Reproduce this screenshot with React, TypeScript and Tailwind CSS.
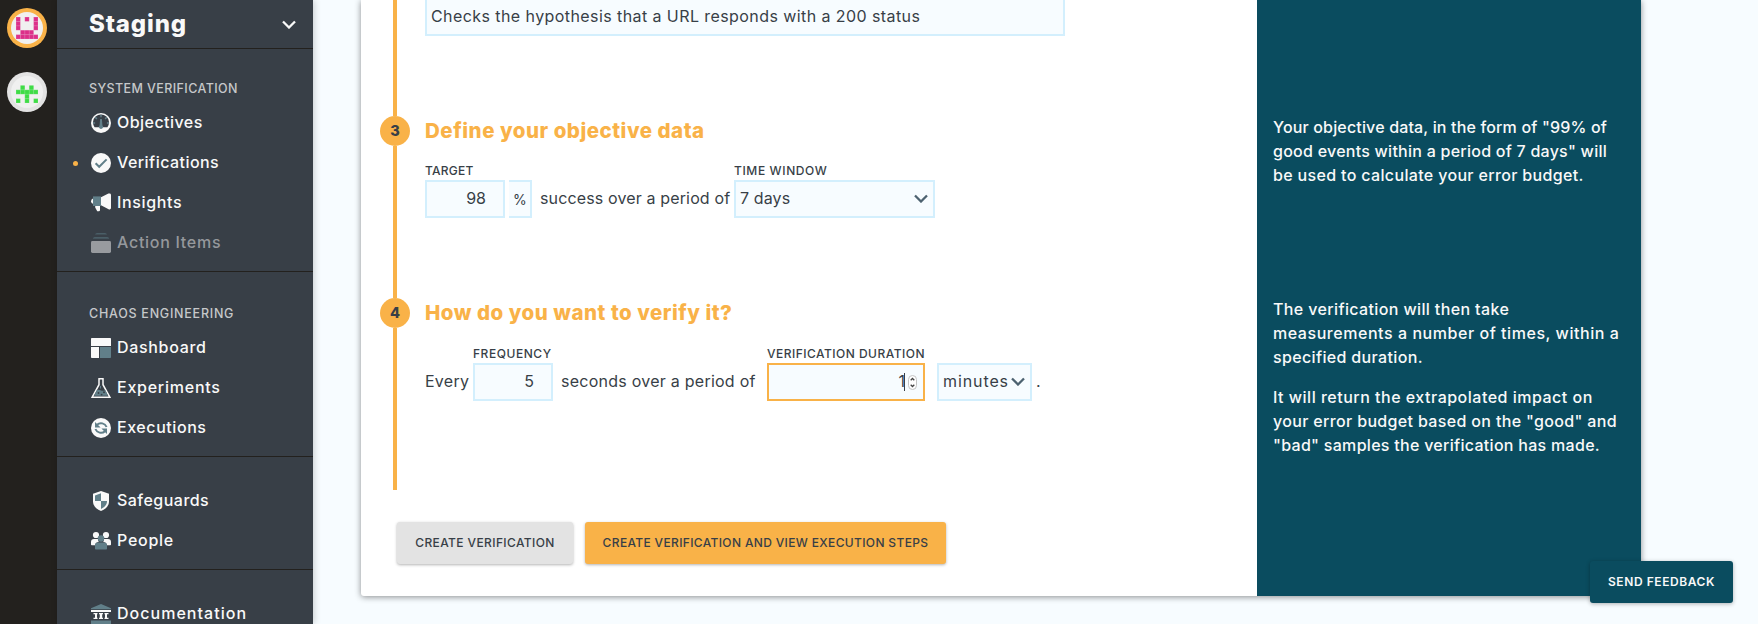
import React from "react";

const LIGHT = "#f9f9f9";
const SLATE = "#617f89";
const DARK = "#383f47";

function Svg({ children }: { children: React.ReactNode }) {
  return (
    <svg width="20" height="20" viewBox="0 0 20 20" className="shrink-0">
      {children}
    </svg>
  );
}

const icons: Record<string, React.ReactNode> = {
  objectives: (
    <Svg>
      <circle cx="10" cy="10" r="10" fill={LIGHT} />
      <path d="M3.6 14.2A8 8 0 1 1 16.4 14.2Z" fill={DARK} />
      <path d="M10 1.8v2.4M4.2 4.2l1.7 1.7M15.8 4.2l-1.7 1.7M1.9 10h2.2M18.1 10h-2.2" stroke={SLATE} strokeWidth="1.5" />
      <path d="M9.1 6h1.8l.5 6.3a2.1 2.1 0 1 1-2.8 0Z" fill={SLATE} />
    </Svg>
  ),
  verifications: (
    <Svg>
      <circle cx="10" cy="10" r="10" fill={LIGHT} />
      <path d="M4.6 10.2l3.6 3.6L15.6 6.4" fill="none" stroke={SLATE} strokeWidth="2" />
    </Svg>
  ),
  insights: (
    <Svg>
      <path d="M2 5.6A3 3 0 0 0 0 8.2a3 3 0 0 0 2 2.6Z" fill={LIGHT} />
      <rect x="2" y="3.4" width="8" height="9.6" fill={SLATE} />
      <path d="M10 4.2 17.4.6A1.8 1.8 0 0 1 20 2v13a1.6 1.6 0 0 1-2.4 1.3L10 12.2ZM4.2 13H9v4a1.2 1.2 0 0 1-1.2 1.2H6.2L4.2 14.6Z" fill={LIGHT} />
    </Svg>
  ),
  actions: (
    <Svg>
      <path d="M6 0h8q1.600 0 2 1.600H4Q4.400 0 6 0ZM3.600 4h12.800q1.400 0 1.800 1.800H1.800Q2.200 4 3.600 4Z" fill="#4a5e67" />
      <rect x="0" y="8" width="20" height="12" rx="1.4" fill="#989b9f" />
    </Svg>
  ),
  dashboard: (
    <Svg>
      <path d="M.8 0h18.400a.8.8 0 0 1 .8.8V8H0V.8A.8.8 0 0 1 .8 0ZM0 9h8v11H.8a.8.8 0 0 1-.8-.8Z" fill={LIGHT} />
      <path d="M9 9h11v10.200a.8.8 0 0 1-.8.8H9Z" fill={SLATE} />
    </Svg>
  ),
  experiments: (
    <Svg>
      <path d="M7.300.7h5.400M8 .7v6L1.200 19.200h17.600L12 6.700v-6" fill="none" stroke={LIGHT} strokeWidth="1.500" />
      <path d="M5.800 12.200q2-.8 4.200.2t4.300-.5L17 17.800H3Z" fill={SLATE} />
      <path d="M9.500 8v2.500" stroke={SLATE} strokeWidth="1" />
      <circle cx="7.500" cy="15" r=".9" fill={DARK} />
      <circle cx="10.600" cy="16.600" r=".9" fill={DARK} />
      <circle cx="13" cy="14.300" r="1" fill={DARK} />
    </Svg>
  ),
  executions: (
    <Svg>
      <circle cx="10" cy="10" r="10" fill={LIGHT} />
      <path d="M6 6.800A6 6 0 0 1 15.600 9M14 13.200A6 6 0 0 1 4.400 11" fill="none" stroke={SLATE} strokeWidth="2" />
      <path d="M4 4v5.400h5.600ZM16 16v-5.400h-5.600Z" fill={SLATE} />
    </Svg>
  ),
  safeguards: (
    <Svg>
      <path d="M10 0 18 2.800V10.500C18 15 14.200 18.400 10 20 5.800 18.400 2 15 2 10.500V2.800Z" fill={LIGHT} />
      <path d="M10 2.300V10H4V4.400ZM10 10h6c0 4-2.500 6.300-6 7.900Z" fill={SLATE} />
    </Svg>
  ),
  people: (
    <Svg>
      <circle cx="5" cy="4" r="3.100" fill={LIGHT} />
      <circle cx="15" cy="4" r="3.100" fill={LIGHT} />
      <path d="M0 11a3 3 0 0 1 3-3h4.200a3.600 3.600 0 0 0 .6 3A4 4 0 0 0 4 14.200H.8a.8.8 0 0 1-.8-.8ZM20 11a3 3 0 0 0-3-3h-4.200a3.600 3.600 0 0 1-.6 3 4 4 0 0 1 3.800 3.200h3.200a.8.8 0 0 0 .8-.8Z" fill={LIGHT} />
      <circle cx="10" cy="7.500" r="3.200" fill={SLATE} />
      <path d="M4 14.500a3 3 0 0 1 3-3h6a3 3 0 0 1 3 3v3.200a.8.8 0 0 1-.8.8H4.800a.8.8 0 0 1-.8-.8Z" fill={SLATE} />
    </Svg>
  ),
  documentation: (
    <Svg>
      <path d="M10 0 20 4.200V5.200H0V4.200ZM0 16.500h20V20H0Z" fill={SLATE} />
      <path d="M0 6h20v2H0ZM2.500 9h4v1.200H6v3.600h.5V15h-4v-1.200H4v-3.600H2.500ZM8 9h4v1.200h-.8v3.600h.8V15H8v-1.200h.8v-3.600H8ZM13.500 9h4v1.200H16v3.600h1.500V15h-4v-1.200h.5v-3.600h-.5Z" fill={LIGHT} />
    </Svg>
  ),
};

function Avatar({ ring, color, cells }: { ring: string; color: string; cells: string[] }) {
  return (
    <svg width="40" height="40" viewBox="0 0 40 40">
      <circle cx="20" cy="20" r="20" fill={ring} />
      <circle cx="20" cy="20" r="16" fill="#f0f0f0" />
      {cells.flatMap((row, y) =>
        row.split("").map((c, x) =>
          c === "X" ? (
            <g key={`${x}-${y}`}>
              <rect x={9 + x * 4.4} y={9 + y * 4.4} width="4.400" height="4.400" fill={color} fillOpacity="0.8" />
              <rect x={9.5 + x * 4.4} y={9.5 + y * 4.4} width="3.500" height="3.500" fill={color} />
            </g>
          ) : null,
        ),
      )}
    </svg>
  );
}

function NavItem({ icon, label, track, active, muted }: { icon: string; label: string; track: string; active?: boolean; muted?: boolean }) {
  return (
    <li className="flex h-10 items-center">
      <span className={`mr-[13px] ml-[16px] size-[5px] rounded-full ${active ? "bg-[#f9b248]" : ""}`} />
      {icons[icon]}
      <span className={`ml-[6px] pb-0.5 text-base font-medium ${track} ${muted ? "text-[#95989c]" : "text-[#f9f9f9]"}`}>{label}</span>
    </li>
  );
}

function Chevron({ color }: { color: string }) {
  return (
    <svg width="14" height="10" viewBox="0 0 14 10" className="shrink-0">
      <path d="M1 2.500l6 6 6-6" fill="none" stroke={color} strokeWidth="2.300" />
    </svg>
  );
}

const LABEL = "flex h-4 items-center pt-[2px] text-[12px] font-medium whitespace-nowrap text-[#383f47]";
const BOX = "flex h-[38px] items-center border-2 border-[#d3effd] bg-[#f7fcff] pb-0.5";
const HEADING = "mt-20 h-[30px] text-[20.500px] leading-[30px] font-extrabold text-[#f9b248]";

function Label({ text, track }: { text: string; track: string }) {
  return <label className={`${LABEL} ${track}`}>{text}</label>;
}

function Marker({ n }: { n: number }) {
  return (
    <div className="flex size-[30px] items-center justify-center rounded-full bg-[#f9b248] text-[14.500px] font-extrabold text-[#383f47]">{n}</div>
  );
}

export default function App() {
  return (
    <div className="relative flex h-[624px] w-[1758px] overflow-hidden bg-[#f7fcff] font-['Inter',sans-serif] text-[#383f47]">
      <aside className="flex w-[57px] shrink-0 flex-col gap-6 bg-[#23211e] pt-2 pl-[7px]">
        <Avatar ring="#f9b248" color="#dc3089" cells={["X.X.X", "X...X", "X...X", ".XXX.", "XXXXX"]} />
        <Avatar ring="#e3e3e3" color="#3fdc46" cells={[".....", ".X.X.", "XXXXX", "..X..", "X.X.X"]} />
      </aside>

      <nav className="w-[256px] shrink-0 bg-[#383f47] shadow-[1px_0_7px_rgba(0,0,0,0.2)]">
        <header className="flex h-[49px] items-center justify-between border-b border-[#23211e] pr-[17px] pl-8">
          <h1 className="text-[24px] font-extrabold tracking-[0.850px] text-[#f9f9f9]">Staging</h1>
          <Chevron color="#f9f9f9" />
        </header>
        <section className="border-b border-[#23211e] pt-[30px] pb-2">
          <h2 className="mb-1 h-5 pl-8 text-[12.500px] leading-5 font-medium tracking-[0.400px] text-[#c6c8ca]">SYSTEM VERIFICATION</h2>
          <ul>
            <NavItem icon="objectives" label="Objectives" track="tracking-[0.450px]" />
            <NavItem icon="verifications" label="Verifications" track="tracking-[0.450px]" active />
            <NavItem icon="insights" label="Insights" track="tracking-[0.650px]" />
            <NavItem icon="actions" label="Action Items" track="tracking-[0.720px]" muted />
          </ul>
        </section>
        <section className="border-b border-[#23211e] pt-8 pb-2">
          <h2 className="mb-1 h-5 pl-8 text-[12.500px] leading-5 font-medium tracking-[0.750px] text-[#c6c8ca]">CHAOS ENGINEERING</h2>
          <ul>
            <NavItem icon="dashboard" label="Dashboard" track="tracking-[0.680px]" />
            <NavItem icon="experiments" label="Experiments" track="tracking-[0.750px]" />
            <NavItem icon="executions" label="Executions" track="tracking-[0.570px]" />
          </ul>
        </section>
        <section className="border-b border-[#23211e] pt-6 pb-2">
          <ul>
            <NavItem icon="safeguards" label="Safeguards" track="tracking-[0.470px]" />
            <NavItem icon="people" label="People" track="tracking-[0.720px]" />
          </ul>
        </section>
        <section className="pt-6">
          <ul>
            <NavItem icon="documentation" label="Documentation" track="tracking-[1.030px]" />
          </ul>
        </section>
      </nav>

      <main className="flex-1 pl-12">
        <div className="flex h-[596px] w-[1280px] rounded-b-[3px] bg-white shadow-[0_1px_6px_rgba(0,0,0,0.45)]">
          <form className="w-[896px] shrink-0">
            <div className="flex h-[490px] pl-[19px]">
              <div className="flex w-[30px] shrink-0 flex-col items-center">
                <div className="h-[116px] w-1 bg-[#f9b248]" />
                <Marker n={3} />
                <div className="h-[152px] w-1 bg-[#f9b248]" />
                <Marker n={4} />
                <div className="h-[162px] w-1 bg-[#f9b248]" />
              </div>

              <div className="ml-[15px]">
                <div className="flex h-9 w-[640px] items-center border-x-2 border-b-2 border-[#d3effd] bg-[#f7fcff] pb-0.5 pl-1 text-base tracking-[0.420px] whitespace-nowrap">
                  Checks the hypothesis that a URL responds with a 200 status
                </div>

                <h3 className={`${HEADING} tracking-[0.510px]`}>Define your objective data</h3>
                <div className="mt-4 flex items-end text-base">
                  <div className="flex flex-col gap-0.5">
                    <Label text="TARGET" track="tracking-[0.230px]" />
                    <div className={`${BOX} w-20 justify-end pr-[17px]`}>98</div>
                  </div>
                  <div className="ml-1 flex h-[38px] w-[23px] items-center border-y-2 border-r-2 border-[#d3effd] bg-[#f7fcff] pl-[4px] text-[14px]">%</div>
                  <span className="ml-2 flex h-[38px] w-[194px] items-center pb-0.5 tracking-[0.140px] whitespace-nowrap">success over a period of</span>
                  <div className="flex flex-col gap-0.5">
                    <Label text="TIME WINDOW" track="tracking-[0.620px]" />
                    <div className={`${BOX} w-[201px] justify-between pr-[5px] pl-1 tracking-[0.120px]`}>
                      7 days
                      <Chevron color="#4d6270" />
                    </div>
                  </div>
                </div>

                <h3 className={`${HEADING} tracking-[0.510px]`}>How do you want to verify it?</h3>
                <div className="mt-[17px] flex items-end text-base">
                  <span className="flex h-[38px] w-12 items-center pb-0.5 tracking-[0.250px]">Every</span>
                  <div className="flex flex-col gap-0.5">
                    <Label text="FREQUENCY" track="tracking-[0.550px]" />
                    <div className={`${BOX} w-20 justify-end pr-[17px]`}>5</div>
                  </div>
                  <span className="ml-2 flex h-[38px] w-[206px] items-center pb-0.5 tracking-[0.250px] whitespace-nowrap">seconds over a period of</span>
                  <div className="flex flex-col gap-0.5">
                    <Label text="VERIFICATION DURATION" track="tracking-[0.480px]" />
                    <div className="flex h-[38px] w-[158px] items-center justify-end border-2 border-[#f9b248] bg-[#f7fcff] pr-1.5">
                      <span className="-mr-px pb-0.5">1</span>
                      <span className="h-[18px] w-px bg-[#383f47]" />
                      <svg width="9" height="15" viewBox="0 0 9 15" className="ml-[3px]">
                        <rect x=".5" y=".5" width="8" height="14" rx="4" fill="#fff" stroke="#c4c4c4" />
                        <path d="M2.700 5.300 4.500 3.500l1.800 1.800M2.700 9.700l1.800 1.800 1.800-1.800" fill="none" stroke="#444" strokeWidth="1.300" />
                      </svg>
                    </div>
                  </div>
                  <div className={`${BOX} ml-3 w-[95px] justify-between pr-[5px] pl-1 tracking-[0.900px]`}>
                    minutes
                    <Chevron color="#4d6270" />
                  </div>
                  <span className="ml-1 flex h-[38px] items-center pb-0.5">.</span>
                </div>
              </div>
            </div>

            <div className="flex gap-3 pt-8 pl-9 text-[12px] font-medium whitespace-nowrap">
              <button className="h-[42px] w-[176px] rounded-[3px] bg-[#e3e3e3] tracking-[0.390px] shadow-[0_1px_3px_rgba(0,0,0,0.3)]">CREATE VERIFICATION</button>
              <button className="h-[42px] w-[361px] rounded-[3px] bg-[#f9b248] tracking-[0.350px] shadow-[0_1px_3px_rgba(0,0,0,0.3)]">
                CREATE VERIFICATION AND VIEW EXECUTION STEPS
              </button>
            </div>
          </form>

          <aside className="w-[384px] bg-[#0a4c5f] pt-[115px] pl-4 text-base leading-6 font-medium whitespace-nowrap text-[#f9f9f9]">
            <p>
              <span className="block tracking-[0.160px]">Your objective data, in the form of "99% of</span>
              <span className="block tracking-[0.250px]">good events within a period of 7 days" will</span>
              <span className="block tracking-[0.340px]">be used to calculate your error budget.</span>
            </p>
            <p className="mt-[110px]">
              <span className="block tracking-[0.370px]">The verification will then take</span>
              <span className="block tracking-[0.550px]">measurements a number of times, within a</span>
              <span className="block tracking-[0.350px]">specified duration.</span>
            </p>
            <p className="mt-4">
              <span className="block tracking-[0.500px]">It will return the extrapolated impact on</span>
              <span className="block tracking-[0.340px]">your error budget based on the "good" and</span>
              <span className="block tracking-[0.290px]">"bad" samples the verification has made.</span>
            </p>
          </aside>
        </div>
      </main>

      <button className="absolute right-[25px] bottom-[21px] h-[42px] w-[143px] rounded-[3px] bg-[#0a4c5f] text-[12px] font-semibold tracking-[0.570px] text-[#f9f9f9] shadow-[0_1px_4px_rgba(0,0,0,0.3)]">
        SEND FEEDBACK
      </button>
    </div>
  );
}
